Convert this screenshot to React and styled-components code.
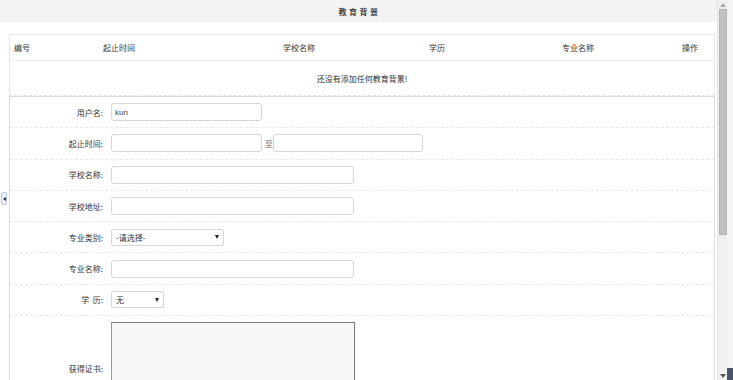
import React from 'react'
import styled, { createGlobalStyle } from 'styled-components'

const GlobalStyle = createGlobalStyle`
  html, body {
    margin: 0;
    padding: 0;
    height: 380px;
    overflow: hidden;
    background: #fff;
  }
  body {
    font-family: "Noto Sans CJK SC", "Liberation Sans", sans-serif;
    font-size: 8px;
    color: #333;
  }
  * { box-sizing: border-box; }
`

const Frame = styled.div`
  display: flex;
  width: 733px;
  height: 380px;
  overflow: hidden;
`

const Main = styled.div`
  position: relative;
  flex: 0 0 717px;
  display: flex;
  flex-direction: column;
  background: #fff;
`

const TitleBar = styled.div`
  height: 22px;
  flex: 0 0 22px;
  background: #f3f3f3;
  display: flex;
  align-items: center;
  justify-content: center;
  font-weight: bold;
  letter-spacing: 2.5px;
  color: #444;
  padding-left: 2px;
`

const Content = styled.div`
  padding: 12px 2px 0 9px;
  display: flex;
  flex-direction: column;
`

const Table = styled.div`
  border: 1px solid #e6e6e6;
  border-bottom: 1px dashed #e2e2e2;
`

const Grid = styled.div`
  display: grid;
  grid-template-columns: 89px 180px 146px 133px 120px 1fr;
  height: 26px;
  align-items: center;
  border-bottom: 1px solid #eeeeee;
`

const HeadCell = styled.div`
  padding-left: 4px;
  color: #333;
`

const EmptyRow = styled.div`
  height: 34px;
  display: flex;
  align-items: center;
  justify-content: center;
  color: #333;
`

const Form = styled.div`
  border: 1px solid #dcdcdc;
  border-bottom: none;
`

const Row = styled.div`
  display: flex;
  align-items: ${p => (p.$top ? 'flex-start' : 'center')};
  height: ${p => p.$h || 31.3}px;
  border-bottom: 1px dashed #e8e8e8;
  gap: 8px;
`

const Label = styled.div`
  width: 93px;
  text-align: right;
  color: #333;
  white-space: pre;
  ${p => p.$mt && `margin-top: ${p.$mt}px;`}
`

const Input = styled.div`
  width: ${p => p.$w}px;
  height: 18px;
  border: 1px solid #d6d6d6;
  border-radius: 3px;
  background: #fff;
  display: flex;
  align-items: center;
  padding-left: 3px;
  font-family: "Liberation Sans", "Noto Sans CJK SC", sans-serif;
  font-size: 8px;
  color: #444;
`

const Between = styled.div`
  display: flex;
  align-items: center;
  gap: 0;
  color: #666;
  margin-left: -5px;
`

const Select = styled.div`
  width: ${p => p.$w}px;
  height: 17px;
  border: 1px solid #d6d6d6;
  border-radius: 2px;
  display: flex;
  align-items: center;
  justify-content: space-between;
  padding: 0 4px 0 4px;
  color: #333;
  &::after {
    content: '';
    border-left: 2.5px solid transparent;
    border-right: 2.5px solid transparent;
    border-top: 4px solid #222;
  }
`

const Textarea = styled.div`
  width: 244px;
  height: 92px;
  margin-top: 6px;
  background: #f7f7f7;
  border: 1px solid #777;
  border-left-color: #999;
`

const Handle = styled.div`
  position: absolute;
  left: 1px;
  top: 192px;
  width: 6px;
  height: 13px;
  border: 1px solid #b9c9e6;
  border-radius: 2px;
  background: #eef3fb;
  display: flex;
  align-items: center;
  justify-content: center;
  &::after {
    content: '';
    border-top: 2.5px solid transparent;
    border-bottom: 2.5px solid transparent;
    border-right: 3px solid #333;
  }
`

const Scrollbar = styled.div`
  flex: 0 0 10px;
  background: #f0f0f0;
  display: flex;
  flex-direction: column;
  align-items: center;
  border-left: 1px solid #e4e4e4;
`

const Arrow = styled.div`
  height: 9px;
  display: flex;
  align-items: center;
  justify-content: center;
`

const Thumb = styled.div`
  width: 8px;
  height: 226px;
  background: #c1c1c1;
  border: 1px solid #b4b4b4;
`

const Track = styled.div`
  flex: 1;
`

const Edge = styled.div`
  flex: 1;
  background: #f4f4f4;
  display: flex;
  flex-direction: column;
  justify-content: flex-end;
  &::after {
    content: '';
    height: 12px;
    background: #4a5568;
  }
`

const columns = ['编号', '起止时间', '学校名称', '学历', '专业名称', '操作']

function Tri({ down }) {
  return (
    <svg width="6" height="4" viewBox="0 0 6 4">
      <path d={down ? 'M0 0 L6 0 L3 4 Z' : 'M0 4 L6 4 L3 0 Z'} fill={down ? '#555' : '#a8a8a8'} />
    </svg>
  )
}

export default function App() {
  return (
    <>
      <GlobalStyle />
      <Frame>
        <Main>
          <TitleBar>教育背景</TitleBar>
          <Content>
            <Table>
              <Grid>
                {columns.map(c => <HeadCell key={c}>{c}</HeadCell>)}
              </Grid>
              <EmptyRow>还没有添加任何教育背景!</EmptyRow>
            </Table>
            <Form>
              <Row>
                <Label>用户名:</Label>
                <Input $w={151}>kun</Input>
              </Row>
              <Row>
                <Label>起止时间:</Label>
                <Input $w={151} />
                <Between>至<Input $w={150} /></Between>
              </Row>
              <Row>
                <Label>学校名称:</Label>
                <Input $w={243} />
              </Row>
              <Row>
                <Label>学校地址:</Label>
                <Input $w={243} />
              </Row>
              <Row>
                <Label>专业类别:</Label>
                <Select $w={113}>-请选择-</Select>
              </Row>
              <Row>
                <Label>专业名称:</Label>
                <Input $w={243} />
              </Row>
              <Row>
                <Label>学  历:</Label>
                <Select $w={53}>无</Select>
              </Row>
              <Row $top $h={106}>
                <Label $mt={47}>获得证书:</Label>
                <Textarea />
              </Row>
            </Form>
          </Content>
          <Handle />
        </Main>
        <Scrollbar>
          <Arrow><Tri /></Arrow>
          <Thumb />
          <Track />
          <Arrow><Tri down /></Arrow>
        </Scrollbar>
        <Edge />
      </Frame>
    </>
  )
}
